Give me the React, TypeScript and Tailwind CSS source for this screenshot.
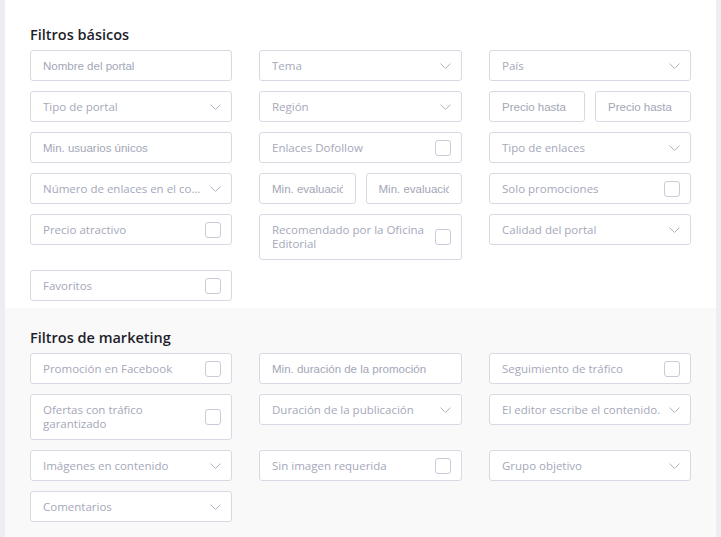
import React from "react";

const Chevron = () => (
  <svg width="11" height="6" viewBox="0 0 11 6" fill="none" className="shrink-0">
    <path d="M0.5 0.6l5 4.8 5-4.8" stroke="#aeb1c3" strokeWidth="1" />
  </svg>
);

const box =
  "rounded-[3px] border border-[#d8d9e2] bg-white text-[11.5px] text-[#a5a8ba]";

const TextBox = ({ placeholder }: { placeholder: string }) => (
  <input
    placeholder={placeholder}
    className={`${box} h-[31px] w-full min-w-0 px-[12px] outline-none font-['Liberation_Sans',Arial,sans-serif] placeholder:text-[#a3a6b7]`}
  />
);

const Select = ({ label, disabled }: { label: string; disabled?: boolean }) => (
  <div
    className={`${box} flex h-[31px] items-center gap-[6px] pl-[12px] pr-[10px] ${
      disabled ? "bg-[#f1f2f6]" : ""
    }`}
  >
    <span className="flex-1 truncate">{label}</span>
    <Chevron />
  </div>
);

const Check = ({ label, tall }: { label: string; tall?: boolean }) => (
  <div
    className={`${box} flex items-center gap-2 pl-[12px] pr-[10px] leading-[14px] ${
      tall ? "h-[46px]" : "h-[31px]"
    }`}
  >
    <span className="flex-1">{label}</span>
    <span className="h-[16px] w-[16px] shrink-0 rounded-[3px] border border-[#c9cbd8] bg-white" />
  </div>
);

const Pair = ({ placeholder }: { placeholder: string }) => (
  <div className="flex gap-[10px]">
    <TextBox placeholder={placeholder} />
    <TextBox placeholder={placeholder} />
  </div>
);

const Heading = ({ children }: { children: React.ReactNode }) => (
  <h2 className="mb-[5px] text-[14.5px] font-semibold leading-[20px] text-[#1e1f2b]">{children}</h2>
);

// three columns: 202 / 203 / 202 with 27px gutters
const grid = "grid grid-cols-[202px_203px_202px] items-start gap-x-[27px] gap-y-[10px]";

export default function App() {
  return (
    <div className="h-[537px] w-[721px] overflow-hidden bg-[#eceef2] px-[5px] font-['Open_Sans',sans-serif]">
      <section className="bg-white px-[25px] pb-[7px] pt-[25px]">
        <Heading>Filtros básicos</Heading>
        <div className={grid}>
          <TextBox placeholder="Nombre del portal" />
          <Select label="Tema" />
          <Select label="País" />

          <Select label="Tipo de portal" />
          <Select label="Región" disabled />
          <Pair placeholder="Precio hasta" />

          <TextBox placeholder="Min. usuarios únicos" />
          <Check label="Enlaces Dofollow" />
          <Select label="Tipo de enlaces" />

          <Select label="Número de enlaces en el contenido" />
          <Pair placeholder="Min. evaluación" />
          <Check label="Solo promociones" />

          <Check label="Precio atractivo" />
          <Check label="Recomendado por la Oficina Editorial" tall />
          <Select label="Calidad del portal" />

          <Check label="Favoritos" />
        </div>
      </section>
      <section className="h-full bg-[#f9f9fa] px-[25px] pt-[20px]">
        <Heading>Filtros de marketing</Heading>
        <div className={grid}>
          <Check label="Promoción en Facebook" />
          <TextBox placeholder="Min. duración de la promoción" />
          <Check label="Seguimiento de tráfico" />

          <Check label="Ofertas con tráfico garantizado" tall />
          <Select label="Duración de la publicación" />
          <Select label="El editor escribe el contenido." />

          <Select label="Imágenes en contenido" />
          <Check label="Sin imagen requerida" />
          <Select label="Grupo objetivo" />

          <Select label="Comentarios" />
        </div>
      </section>
    </div>
  );
}
